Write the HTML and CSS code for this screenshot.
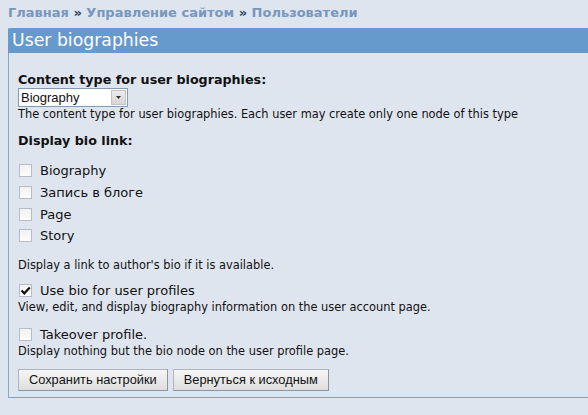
FILE: index.html
```html
<!DOCTYPE html>
<html>
<head>
<meta charset="utf-8">
<link rel="stylesheet" href="styles.css">
</head>
<body>
<div class="crumbs"><a>Главная</a> » <a>Управление сайтом</a> » <a>Пользователи</a></div>
<div class="panel">
  <div class="panel-head">User biographies</div>
  <div class="panel-body">
    <div class="item">
      <div class="label">Content type for user biographies:</div>
      <div class="select"><span class="select-text">Biography</span><span class="select-btn"><svg width="5" height="3" viewBox="0 0 5 3"><path d="M0 0h5L2.5 3z" fill="#333"/></svg></span></div>
      <div class="desc">The content type for user biographies. Each user may create only one node of this type</div>
    </div>
    <div class="item">
      <div class="label">Display bio link:</div>
      <div class="checks">
        <div class="check"><span class="box"></span>Biography</div>
        <div class="check"><span class="box"></span>Запись в блоге</div>
        <div class="check"><span class="box"></span>Page</div>
        <div class="check"><span class="box"></span>Story</div>
      </div>
      <div class="desc">Display a link to author's bio if it is available.</div>
    </div>
    <div class="item item-single">
      <div class="check"><span class="box"><svg width="13" height="13" viewBox="0 0 13 13"><path d="M2.5 6.5l2.8 2.8L10.8 3.5" fill="none" stroke="#111" stroke-width="2.2"/></svg></span>Use bio for user profiles</div>
      <div class="desc">View, edit, and display biography information on the user account page.</div>
    </div>
    <div class="item item-single">
      <div class="check"><span class="box"></span>Takeover profile.</div>
      <div class="desc">Display nothing but the bio node on the user profile page.</div>
    </div>
    <div class="buttons">
      <span class="btn">Сохранить настройки</span>
      <span class="btn">Вернуться к исходным</span>
    </div>
  </div>
</div>
</body>
</html>
```
FILE: styles.css
```css
html, body { margin: 0; padding: 0; }
body {
  background: #dfe5ef;
  font-family: "DejaVu Sans", Verdana, sans-serif;
  color: #111;
  width: 588px;
  height: 415px;
  overflow: hidden;
}
.crumbs {
  padding: 5px 0 0 8px;
  height: 28px;
  box-sizing: border-box;
  font-weight: bold;
  font-size: 13px;
  line-height: 16px;
  color: #26435f;
}
.crumbs a { color: #7797bd; }
.panel {
  margin-left: 8px;
  width: 600px;
  border-left: 1px solid #88a6c6;
  border-bottom: 1px solid #7ea1c4;
}
.panel-head {
  background: #6699cc;
  color: #fff;
  font-size: 17.3px;
  height: 25px;
  line-height: 24px;
  padding-left: 4px;
  border-top-left-radius: 3px;
  margin-left: -1px;
}
.panel-body {
  padding: 19px 9px 6px 9px;
}
.item { margin-bottom: 11px; }
.item-single { margin-top: -2px; margin-bottom: 11px; }
.item-single + .item-single { margin-top: 0; margin-bottom: 10px; }
.label {
  font-weight: bold;
  font-size: 12.7px;
  line-height: 16px;
}
.select {
  display: flex;
  width: 110px;
  height: 19px;
  box-sizing: border-box;
  border: 1px solid #7f9db9;
  background: #fff;
  font-family: "Liberation Sans", Arial, sans-serif;
  font-size: 13px;
}
.select-text { flex: 1; padding-left: 2px; line-height: 17px; }
.select-btn {
  width: 15px;
  margin: 1px;
  background: linear-gradient(#ececec, #d6d6d6);
  border: 1px solid #c4c4c4;
  box-sizing: border-box;
  display: flex;
  align-items: center;
  justify-content: center;
}
.desc {
  font-size: 11.4px;
  line-height: 15px;
}
.checks { padding-top: 11px; margin-bottom: 11px; }
.checks .check { height: 21.67px; }
.check {
  display: flex;
  align-items: center;
  font-size: 13px;
  height: 18px;
}
.box {
  width: 13px;
  height: 13px;
  border: 1px solid #b5bcc7;
  background: linear-gradient(#f2f2f2, #fcfcfc);
  margin: 0 8px 0 1px;
  display: inline-flex;
  box-sizing: border-box;
}
.box svg { margin: -1px; }
.buttons { display: flex; gap: 5px; }
.btn {
  font-family: "Liberation Sans", Arial, sans-serif;
  font-size: 12.8px;
  height: 22px;
  line-height: 20px;
  box-sizing: border-box;
  padding: 0 10px;
  border: 1px solid #b0b5bd;
  border-right-color: #8f949b;
  border-bottom-color: #8f949b;
  background: linear-gradient(#f6f6f6, #dedede);
}
```
